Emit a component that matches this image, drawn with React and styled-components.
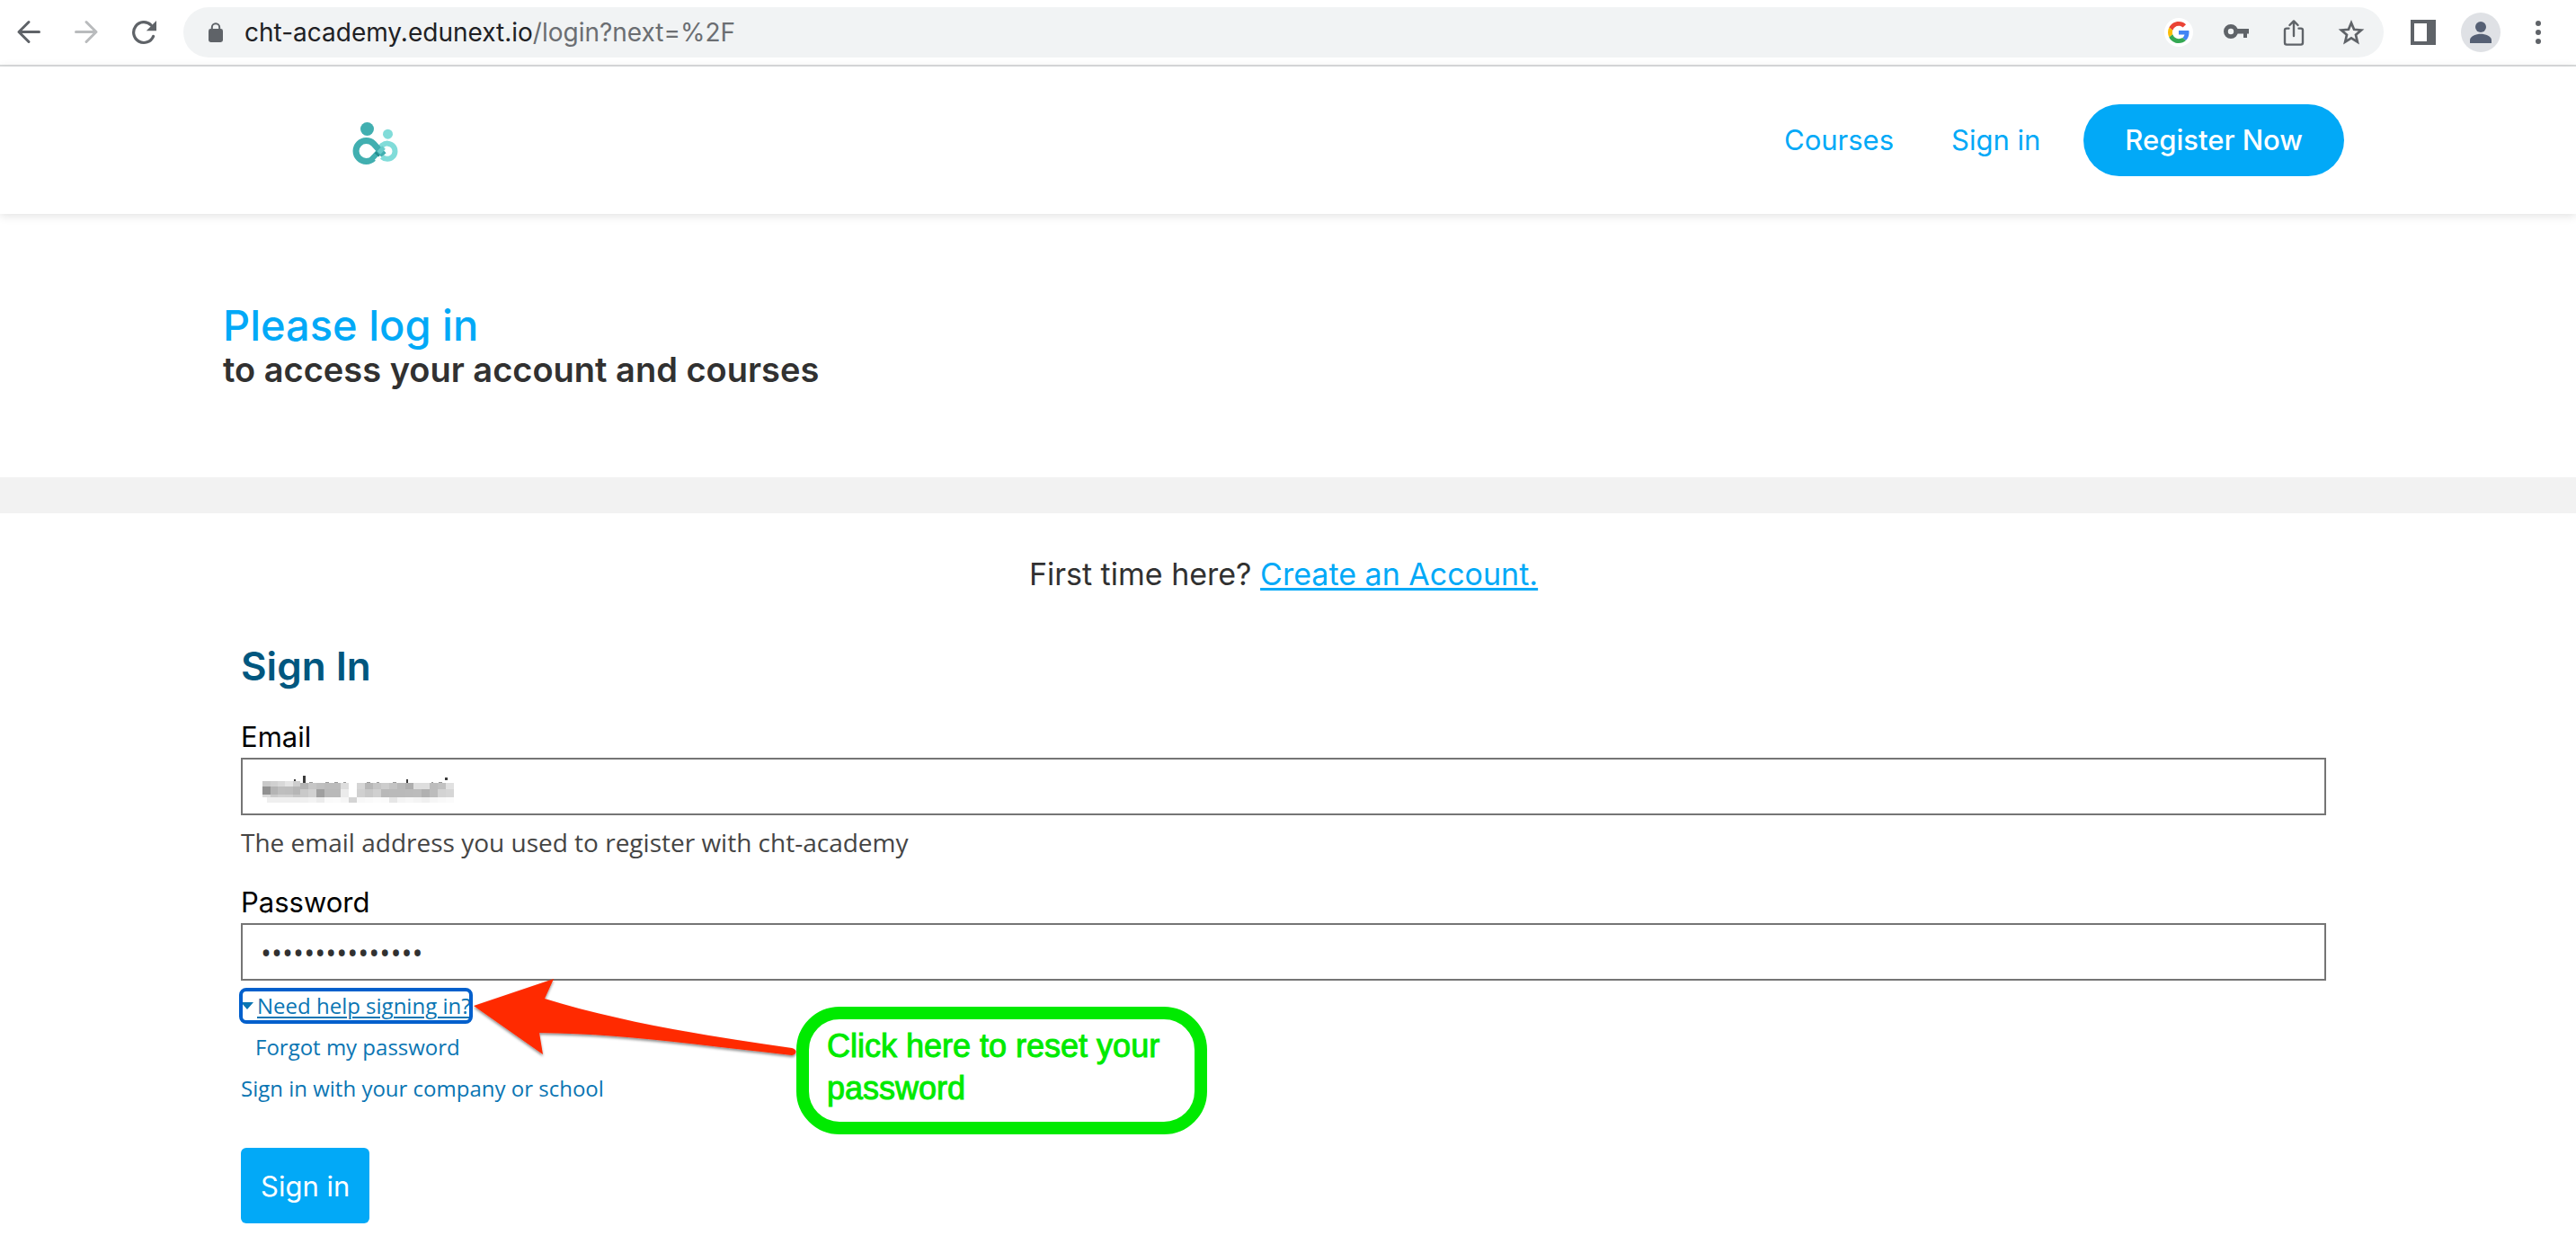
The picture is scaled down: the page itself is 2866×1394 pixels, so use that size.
import React from 'react';
import styled, { createGlobalStyle, css } from 'styled-components';

const sans = 'Inter, "Liberation Sans", sans-serif';
const openSans = '"Open Sans", "Noto Sans", sans-serif';
const blue = '#02a9f7';
const iconGrey = '#5f6368';

const GlobalStyle = createGlobalStyle`
  *, *::before, *::after { box-sizing: border-box; }
  body { margin: 0; background: #fff; color: #313131; font-family: ${sans}; }
  h1, h2, p { margin: 0; }
  button { font: inherit; border: 0; background: none; padding: 0; cursor: pointer; }
  a { text-decoration: none; }
  svg { display: block; flex: none; }
`;

/* Browser bar */
const BrowserBar = styled.div`
  display: flex;
  align-items: center;
  height: 74px;
  padding: 0 26px 0 18px;
  border-bottom: 2px solid #dadcdd;
`;
const NavButtons = styled.div`
  display: flex;
  gap: 36px;
  padding-right: 30px;
`;
const IconButton = styled.button`
  display: flex;
  align-items: center;
  justify-content: center;
  flex: none;
  width: ${(p) => p.$size || 32}px;
  height: ${(p) => p.$size || 32}px;
  color: ${(p) => (p.$faded ? '#b9bbbd' : iconGrey)};
  background: ${(p) => p.$fill || 'transparent'};
  border-radius: 50%;
`;
const AddressBar = styled.div`
  display: flex;
  flex: 1;
  align-items: center;
  gap: 20px;
  height: 56px;
  padding: 0 20px 0 24px;
  border-radius: 28px;
  background: #f1f3f4;
`;
const Url = styled.div`
  flex: 1;
  font-size: 28px;
  line-height: 40px;
  color: #202124;
`;
const UrlPath = styled.span`
  color: #6b6e72;
`;
const AddressActions = styled.div`
  display: flex;
  gap: 32px;
`;
const WindowActions = styled.div`
  display: flex;
  align-items: center;
  gap: 26px;
  padding-left: 28px;
`;

/* Site header */
const SiteHeader = styled.header`
  display: flex;
  align-items: center;
  justify-content: space-between;
  height: 164px;
  padding: 0 258px 0 248px;
  box-shadow: 0 2px 10px rgba(0, 0, 0, 0.12);
`;
const LogoLink = styled.a`
  padding-left: 140px;
`;
const SiteNav = styled.nav`
  display: flex;
  align-items: center;
  gap: 32px;
  font-size: 31px;
  line-height: 40px;
`;
const NavLink = styled.a`
  padding: 0 16px;
  color: ${blue};
`;
const RegisterLink = styled.a`
  padding: 20px 46px;
  border-radius: 40px;
  background: ${blue};
  color: #fff;
  font-weight: 500;
`;

/* Hero */
const Hero = styled.section`
  padding: 96px 258px 99px 248px;
  border-bottom: 40px solid #f2f2f2;
`;
const HeroTitle = styled.h1`
  color: ${blue};
  font-size: 47px;
  font-weight: 500;
  line-height: 56px;
`;
const HeroText = styled.p`
  font-size: 38px;
  font-weight: 600;
  line-height: 42px;
`;

/* Form */
const Main = styled.main`
  padding: 44px 278px 32px 268px;
`;
const FirstTime = styled.p`
  font-size: 34px;
  line-height: 48px;
  text-align: center;
`;
const CreateLink = styled.a`
  color: ${blue};
  text-decoration: underline 3px;
  text-underline-offset: 3px;
`;
const FormTitle = styled.h2`
  margin: 50px 0 28px;
  color: #00577f;
  font-size: 44px;
  font-weight: 600;
  line-height: 56px;
`;
const Label = styled.label`
  display: block;
  color: #000;
  font-size: 31px;
  line-height: 46px;
`;
const InputWrap = styled.div`
  position: relative;
`;
const Input = styled.input`
  display: block;
  width: 100%;
  height: 64px;
  padding: 0 20px;
  border: 2px solid #757575;
  border-radius: 0;
  background: #fff;
  color: #313131;
  font-family: ${openSans};
  font-size: 32px;
  outline: none;
`;
const Redaction = styled.svg`
  position: absolute;
  left: 17px;
  top: 9px;
  pointer-events: none;
`;
const Hint = styled.p`
  margin: 10px 0 24px;
  color: #454545;
  font-family: ${openSans};
  font-size: 28px;
  line-height: 40px;
`;
const HelpLinks = styled.div`
  position: relative;
  display: flex;
  flex-direction: column;
  align-items: flex-start;
  gap: 10px;
  margin: 10px 0 48px;
`;
const helpText = css`
  color: #0a75b3;
  font-family: ${openSans};
  font-size: 24px;
  line-height: 36px;
`;
const HelpToggle = styled.button`
  && {
    ${helpText}
  }
  display: flex;
  align-items: center;
  gap: 4px;
  border-radius: 6px;
  outline: 4px solid #005fcc;
  outline-offset: -2px;
`;
const HelpToggleText = styled.span`
  text-decoration: underline 2px;
  text-underline-offset: 3px;
`;
const HelpLink = styled.a`
  ${helpText}
  padding-left: ${(p) => (p.$indent ? 16 : 0)}px;
`;
const SubmitButton = styled.button`
  && {
    height: 84px;
    padding: 0 22px;
    border-radius: 6px;
    background: ${blue};
    color: #fff;
    font-size: 31px;
  }
`;

/* Callout drawn over the form */
const Callout = styled.aside`
  position: absolute;
  left: 257px;
  top: -14px;
  display: flex;
  align-items: flex-start;
`;
const CalloutBox = styled.p`
  width: 457px;
  height: 142px;
  margin: 33px 0 0 -5px;
  padding: 6px 20px;
  border: 14px solid #00ea00;
  border-radius: 48px;
  background: #fff;
  color: #00ea00;
  font-family: "Liberation Sans", Arial, sans-serif;
  font-size: 36px;
  line-height: 47px;
  -webkit-text-stroke: 1px #00ea00;
`;

const Arrow = ({ back }) => (
  <svg width="28" height="28" viewBox="0 0 28 28" fill="none" stroke="currentColor" strokeWidth="3" strokeLinecap="round" strokeLinejoin="round">
    <path d={back ? 'M25.5 13.5H3M14 2.5 3 13.5l11 11' : 'M2.5 13.5H25M14 2.5l11 11-11 11'} />
  </svg>
);
const Reload = () => (
  <svg width="28" height="28" viewBox="0 0 28 28" fill="none">
    <path d="M24.6 18.4A11.4 11.4 0 1 1 22 5.9" stroke="currentColor" strokeWidth="3.2" strokeLinecap="round" />
    <path d="M28 1v11.2H16.8z" fill="currentColor" />
  </svg>
);
const Lock = () => (
  <svg width="24" height="24" viewBox="0 0 24 24">
    <rect x="4" y="8" width="16" height="15" rx="2.4" fill={iconGrey} />
    <path d="M7.8 9V6.4a4.2 4.2 0 0 1 8.4 0V9" fill="none" stroke={iconGrey} strokeWidth="2" />
  </svg>
);
const GoogleG = () => (
  <svg width="24" height="24" viewBox="0 0 48 48">
    <path fill="#EA4335" d="M24 9.5c3.54 0 6.71 1.22 9.21 3.6l6.85-6.85C35.9 2.38 30.47 0 24 0 14.62 0 6.51 5.38 2.56 13.22l7.98 6.19C12.43 13.72 17.74 9.5 24 9.5z" />
    <path fill="#4285F4" d="M46.98 24.55c0-1.57-.15-3.09-.38-4.55H24v9.02h12.94c-.58 2.96-2.26 5.48-4.78 7.18l7.73 6c4.51-4.18 7.09-10.36 7.09-17.65z" />
    <path fill="#FBBC05" d="M10.53 28.59A14.5 14.5 0 0 1 9.77 24c0-1.6.27-3.14.76-4.59l-7.98-6.19A23.9 23.9 0 0 0 0 24c0 3.88.92 7.54 2.56 10.78z" />
    <path fill="#34A853" d="M24 48c6.48 0 11.93-2.13 15.89-5.81l-7.73-6c-2.15 1.45-4.92 2.3-8.16 2.3-6.26 0-11.57-4.22-13.47-9.91l-7.98 6.19C6.51 42.62 14.62 48 24 48z" />
  </svg>
);
const Key = () => (
  <svg width="32" height="32" viewBox="0 0 32 32">
    <circle cx="10" cy="15" r="5.6" fill="none" stroke="currentColor" strokeWidth="4.8" />
    <path d="M16 12h14v5.4h-2V22h-4v-4.6h-8z" fill="currentColor" />
  </svg>
);
const Share = () => (
  <svg width="32" height="32" viewBox="0 0 32 32" fill="none" stroke="currentColor" strokeWidth="2.4" strokeLinecap="round" strokeLinejoin="round">
    <path d="M10.5 11.6H8a2 2 0 0 0-2 2v14a2 2 0 0 0 2 2h16a2 2 0 0 0 2-2v-14a2 2 0 0 0-2-2h-2.5" />
    <path d="M16 20V3.6M11.400 8 16 3.400 20.600 8" />
  </svg>
);
const Star = () => (
  <svg width="32" height="32" viewBox="0 0 32 32" fill="none" stroke="currentColor" strokeWidth="2.7">
    <path d="M16 5.4l3.1 7.4 8 .7-6.1 5.3 1.850 7.850L16 22.400l-6.850 4.250L11 18.800l-6.100-5.300 8-.7z" />
  </svg>
);
const SidePanel = () => (
  <svg width="32" height="32" viewBox="0 0 32 32">
    <path d="M2 2h28v28H2zM6 6v20h14V6z" fill="currentColor" fillRule="evenodd" />
  </svg>
);
const Person = () => (
  <svg width="44" height="44" viewBox="0 0 44 44" fill="#566074">
    <circle cx="22" cy="16" r="6" />
    <path d="M10 34v-3.500c0-4 7-6.700 12-6.700s12 2.700 12 6.700V34z" />
  </svg>
);
const Dots = () => (
  <svg width="32" height="32" viewBox="0 0 32 32" fill="currentColor">
    <circle cx="16" cy="6" r="3" />
    <circle cx="16" cy="16" r="3" />
    <circle cx="16" cy="26" r="3" />
  </svg>
);
const Logo = () => (
  <svg width="60" height="54" viewBox="0 0 60 54" fill="none">
    <circle cx="20.500" cy="14.500" r="7.500" fill="#41afb0" />
    <circle cx="43.500" cy="20.200" r="5.500" fill="#81dcd9" />
    <path d="M26 47.500 37 36" stroke="#41afb0" strokeWidth="6" />
    <path d="M31 43.500l4-4.500" stroke="#228d8f" strokeWidth="6" />
    <path d="M37 45.500A8.600 8.600 0 1 0 37.500 32.500L34 36.500" stroke="#81dcd9" strokeWidth="6" />
    <path d="M27.500 47.300A11.500 11.500 0 1 1 27.500 30.700L39 43.500" stroke="#41afb0" strokeWidth="7" />
    <path d="M33.500 41 39 35" stroke="#68cac9" strokeWidth="5" />
  </svg>
);

const smear = [
  ['#c9c9c9', '#d0d0d0', '#d8d8d8', '#e4e4e4', '#cecece'],
  ['#919191', '#b4b4b4', '#bebebe', '#bdbdbd', '#b6b6b6'],
  ['#dadada', '#cacaca', '#d0d0d0', '#cfcfcf', '#c6c6c6'],
];
const mosaic = [
  'b4,c6,bf,bb,bb,dd,ff,d5,b7,c5,cd,c3,b9,ae,de,de,bc,c1,e1'.split(','),
  'c9,d1,a0,b9,b9,eb,ff,d0,c8,d0,b9,ba,ba,bb,bc,b1,bc,d3,d6'.split(','),
  'f0,f3,ec,fa,fb,f6,d4,f8,fa,fc,fb,e6,f4,f7,f4,f0,f6,f9,fb'.split(','),
];
const rowY = [57, 78, 105];
const rowH = [21, 27, 18];

const RedactedValue = () => (
  <Redaction width="240" height="48" viewBox="0 0 720 144" shapeRendering="crispEdges" aria-hidden="true">
    <path d="M126 45h6v8h-6zM157 34h8v24h-8zM500 46h7v12h-7zM630 38h8v9h-8zM26 98l10 2v8z" fill="#3b3b3b" />
    <path d="M176 54h12v4h-12zM230 54h12v4h-12zM262 54h10v4h-10zM290 54h10v4h-10zM368 54h12v4h-12zM402 54h10v4h-10zM455 54h12v4h-12zM584 54h8v4h-8zM610 54h10v4h-10z" fill="#999" />
    {smear.map((row, r) =>
      row.map((c, i) => <rect key={`${r}${i}`} x={22 + i * 25} y={[50, 70, 95][r]} width="25" height={[20, 25, 10][r]} fill={c} />)
    )}
    <rect x="37" y="105" width="110" height="18" fill="#efefef" />
    {mosaic.map((row, r) =>
      row.map((c, i) => <rect key={`${r}${i}`} x={147 + i * 27} y={rowY[r]} width="27" height={rowH[r]} fill={`#${c}${c}${c}`} />)
    )}
  </Redaction>
);

const CalloutArrow = () => (
  <svg width="366" height="100" viewBox="0 0 366 100">
    <defs>
      <filter id="arrowShadow" x="-5%" y="-10%" width="110%" height="130%">
        <feDropShadow dx="0" dy="2" stdDeviation="1.5" floodColor="#000" floodOpacity="0.45" />
      </filter>
    </defs>
    <path
      d="M2 32 91 2 81 24C165 50 263 66 356 79c7 1.500 5 8 0 8C240 74 162 63 75 62L79 86z"
      fill="#ff2a00"
      filter="url(#arrowShadow)"
    />
  </svg>
);

export default function App() {
  return (
    <>
      <GlobalStyle />
      <BrowserBar>
        <NavButtons>
          <IconButton $size={28} aria-label="Back"><Arrow back /></IconButton>
          <IconButton $size={28} $faded aria-label="Forward"><Arrow /></IconButton>
          <IconButton $size={28} aria-label="Reload"><Reload /></IconButton>
        </NavButtons>
        <AddressBar>
          <Lock />
          <Url>cht-academy.edunext.io<UrlPath>/login?next=%2F</UrlPath></Url>
          <AddressActions>
            <IconButton $fill="#fff" aria-label="Search with Google"><GoogleG /></IconButton>
            <IconButton aria-label="Passwords"><Key /></IconButton>
            <IconButton aria-label="Share"><Share /></IconButton>
            <IconButton aria-label="Bookmark"><Star /></IconButton>
          </AddressActions>
        </AddressBar>
        <WindowActions>
          <IconButton aria-label="Side panel"><SidePanel /></IconButton>
          <IconButton $size={44} $fill="#dfe1e5" aria-label="Profile"><Person /></IconButton>
          <IconButton aria-label="Menu"><Dots /></IconButton>
        </WindowActions>
      </BrowserBar>

      <SiteHeader>
        <LogoLink href="#" aria-label="Home"><Logo /></LogoLink>
        <SiteNav>
          <NavLink href="#">Courses</NavLink>
          <NavLink href="#">Sign in</NavLink>
          <RegisterLink href="#">Register Now</RegisterLink>
        </SiteNav>
      </SiteHeader>

      <Hero>
        <HeroTitle>Please log in</HeroTitle>
        <HeroText>to access your account and courses</HeroText>
      </Hero>

      <Main>
        <FirstTime>First time here? <CreateLink href="#">Create an Account.</CreateLink></FirstTime>
        <form onSubmit={(e) => e.preventDefault()}>
          <FormTitle>Sign In</FormTitle>
          <Label htmlFor="email">Email</Label>
          <InputWrap>
            <Input id="email" type="email" aria-describedby="email-hint" />
            <RedactedValue />
          </InputWrap>
          <Hint id="email-hint">The email address you used to register with cht-academy</Hint>
          <Label htmlFor="password">Password</Label>
          <Input id="password" type="password" defaultValue="aaaaaaaaaaaaaaa" />
          <HelpLinks>
            <HelpToggle type="button" aria-expanded="true">
              <svg width="14" height="8" viewBox="0 0 14 8"><path d="M0 0h14L7 8z" fill="#0a75b3" /></svg>
              <HelpToggleText>Need help signing in?</HelpToggleText>
            </HelpToggle>
            <HelpLink href="#" $indent>Forgot my password</HelpLink>
            <HelpLink href="#">Sign in with your company or school</HelpLink>
            <Callout>
              <CalloutArrow />
              <CalloutBox>Click here to reset your password</CalloutBox>
            </Callout>
          </HelpLinks>
          <SubmitButton type="submit">Sign in</SubmitButton>
        </form>
      </Main>
    </>
  );
}
